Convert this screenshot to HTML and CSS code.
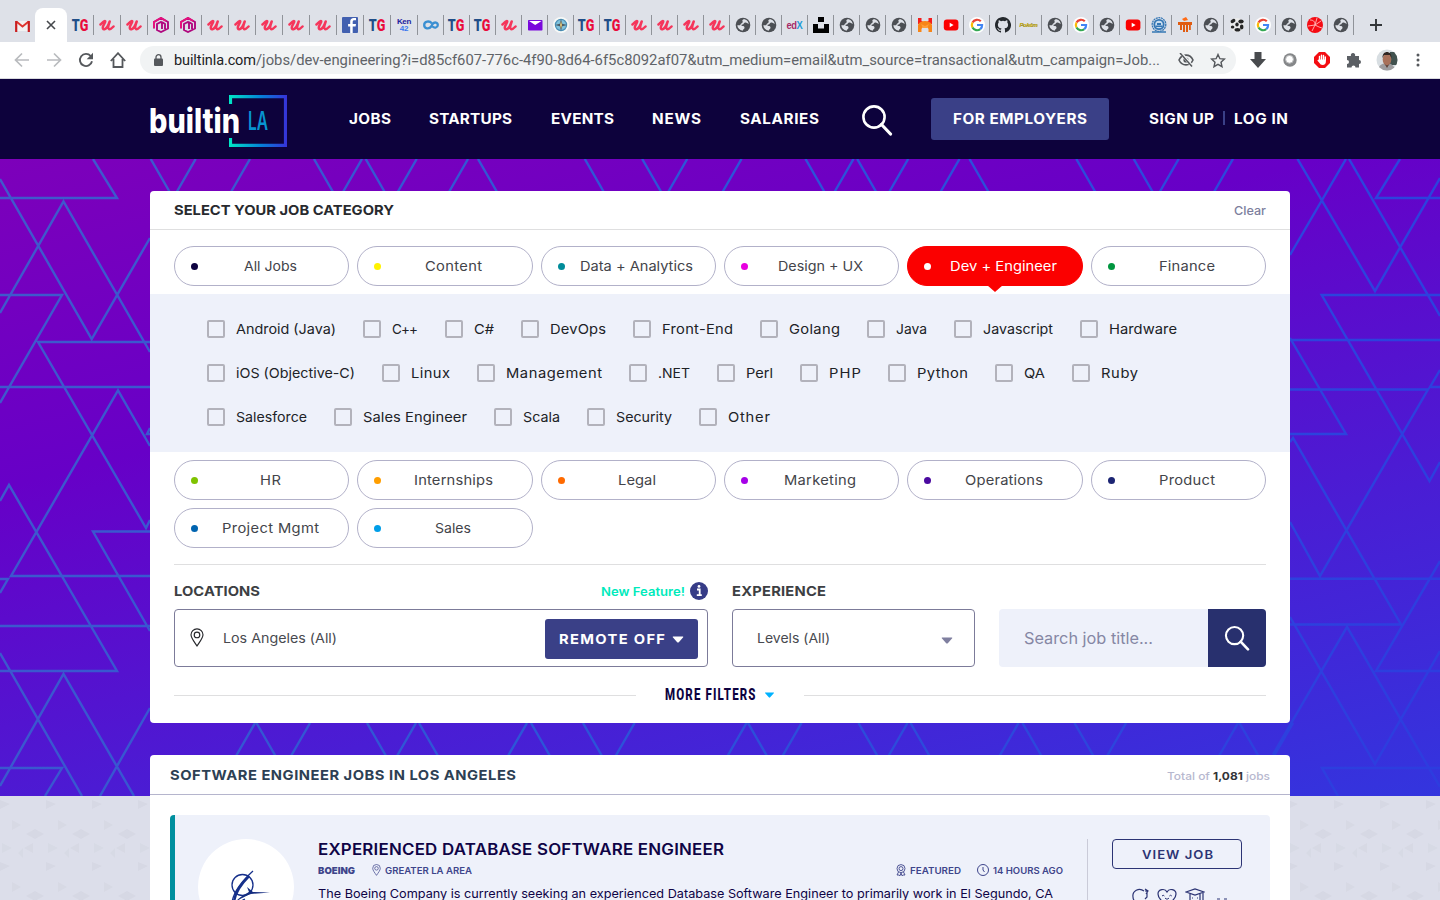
FILE: index.html
```html
<!DOCTYPE html>
<html lang="en">
<head>
<meta charset="utf-8">
<title>Dev + Engineer Jobs | Built In LA</title>
<link rel="stylesheet" href="styles.css">
</head>
<body>
<svg width="0" height="0" class="defs">
  <defs>
    <symbol id="u" viewBox="0 0 16 16"><path d="M1.500 7.500C3.500 5.500 5 3.500 6 4S4.500 7.500 4 9.500s0 3 1.500 2.700c2.500-.4 4-4.200 5.200-7.700-1.200 3.500-2 7-.7 7.600 1.200.4 3-1 4.500-2.600" fill="none" stroke="#f5365b" stroke-width="2.500" stroke-linecap="round" stroke-linejoin="round"/></symbol>
    <symbol id="gn" viewBox="0 0 16 16"><path d="M1 11.500V5l7-4 7 4v6.500L8 15l-4-2V7l4-2 1 1v6m0-7 3 2v5" fill="none" stroke="#b0087f" stroke-width="1.900"/><path d="M1 11V5l7-4 5 3" fill="none" stroke="#e5127d" stroke-width="2"/></symbol>
    <symbol id="fb" viewBox="0 0 16 16"><rect width="16" height="16" rx="1" fill="#4260b0"/><path d="M14 3.200h-1.600c-1.200 0-1.700.6-1.700 1.700V7H14l-.4 2.500h-2.900V16H8.200V9.500H6.100V7h2.100V4.500C8.200 2.200 9.600 1 11.800 1c1 0 2.200.1 2.200.1z" fill="#fff"/></symbol>
    <symbol id="co" viewBox="0 0 16 16"><path d="M8.800 6.200C6.500 3.500 1.200 4 1.200 8s5 4.500 7 1.500L9.600 7c2-2.500 5.200-1.600 5.200 1s-3.200 3.600-5.400 1.500" fill="none" stroke="#3a8fd2" stroke-width="2.300"/></symbol>
    <symbol id="mail" viewBox="0 0 16 16"><rect x="1" y="3" width="14.500" height="10.500" rx=".8" fill="#7a08dc"/><path d="M2 4h12.500L8.200 8z" fill="#fff"/></symbol>
    <symbol id="compass" viewBox="0 0 16 16"><circle cx="8" cy="8" r="8" fill="#f7f9f7"/><circle cx="8" cy="8" r="5.600" fill="#7fc2dc" stroke="#4b90b8" stroke-width="1.200"/><path d="m8 2 1.200 4.800L14 8l-4.800 1.200L8 14 6.800 9.200 2 8l4.800-1.200z" fill="#4a5963"/><path d="m8 4 1 4-1 4-1-4z" fill="#e3c879"/></symbol>
    <symbol id="globe" viewBox="0 0 16 16"><circle cx="8" cy="8" r="7.300" fill="#4c4f54"/><path d="M8.500 2.300c2.500-.3 5 2 5.200 4.700-1.500-.6-2-1.700-3.700-1.400-1.500.4-1 1.900-2.500 1.900C6 7.500 6.100 9 7.500 9c1.200 0 2.200.5 2 2-.3 1.300-1.500 1-1.800 2.700C4.500 13 2.600 11 2.300 8.200c1.500 0 2.700.6 3.200-.7.400-1.300 2-1 2.200-2.500.1-1-1.200-1.500.8-2.700z" fill="#dfe2e8"/></symbol>
    <symbol id="unsplash" viewBox="0 0 16 16"><path d="M5 0h6v5H5zM0 7h5v4.500h6V7h5v9H0z" fill="#000"/></symbol>
    <symbol id="moz" viewBox="0 0 16 16"><path d="M1 1h3.500v3L8 6l3.500-2V1H15v6H1z" fill="#f41d1d"/><path d="M1 15V8c1-3 4-4 7-4s6 1 7 4v7h-3.500v-3C10 9 6 9 4.500 12v3z" fill="#f78518"/><path d="m4 7 4 2 4-2-2 4H6z" fill="#ff9e38"/></symbol>
    <symbol id="yt" viewBox="0 0 16 16"><rect x=".8" y="2.500" width="14.600" height="11" rx="3" fill="#fb0000"/><path d="M6.700 5.700v4.600L10.600 8z" fill="#fff"/></symbol>
    <symbol id="goog" viewBox="0 0 16 16"><circle cx="8" cy="8" r="8" fill="#fff"/><g fill="none" stroke-width="2.200"><path d="M11.800 4.300A5.200 5.200 0 0 0 3.500 5.500" stroke="#ea4335"/><path d="M3.500 5.500a5.200 5.200 0 0 0 0 5" stroke="#fbbc05"/><path d="M3.500 10.500a5.200 5.200 0 0 0 7.800 1.600" stroke="#34a853"/><path d="M11.300 12.100A5 5 0 0 0 13.100 8H8" stroke="#4285f4"/></g></symbol>
    <symbol id="gh" viewBox="0 0 16 16"><path d="M8 0C3.580 0 0 3.580 0 8c0 3.540 2.290 6.530 5.470 7.590.4.070.55-.17.55-.38v-1.490c-2.230.49-2.700-.95-2.700-.95-.36-.92-.89-1.170-.89-1.170-.73-.5.050-.49.050-.49.800.060 1.230.83 1.230.83.710 1.230 1.870.87 2.330.66.070-.52.28-.87.5-1.070-1.780-.2-3.640-.89-3.640-3.950 0-.87.310-1.590.82-2.150-.08-.2-.36-1.020.08-2.120 0 0 .67-.21 2.200.82a7.600 7.600 0 0 1 4 0c1.530-1.040 2.200-.82 2.200-.82.44 1.100.16 1.920.08 2.120.51.56.82 1.270.82 2.150 0 3.070-1.870 3.750-3.650 3.950.29.25.54.73.54 1.480v2.200c0 .21.150.46.55.38A8 8 0 0 0 8 0z" fill="#24282d"/></symbol>
    <symbol id="gear" viewBox="0 0 16 16"><circle cx="8" cy="7.500" r="6.800" fill="none" stroke="#3577b5" stroke-width="1.300" stroke-dasharray="2 .6"/><circle cx="8" cy="7.500" r="4.700" fill="#c9ddef" stroke="#3577b5" stroke-width="1.800"/><path d="M4.500 8.500h7v1.500h-7zM6 6h4v2H6z" fill="#3577b5"/><path d="M1 15h14" stroke="#3577b5" stroke-width="1.500"/></symbol>
    <symbol id="manip" viewBox="0 0 16 16"><path d="M1 5h14v3H1zM3 8h2v5H3zM6 8h2v7H6zM9 8h2v7H9zM12 8h1.800v5H12z" fill="#e05b10"/><path d="m5 2 4-2 2 3-4 1z" fill="#ff6b16"/></symbol>
    <symbol id="ball" viewBox="0 0 16 16"><circle cx="8" cy="8" r="7" fill="#ececec"/><g fill="#252525"><ellipse cx="4" cy="4" rx="2.600" ry="1.800" transform="rotate(-30 4 4)"/><ellipse cx="12" cy="4.500" rx="2.700" ry="2"/><ellipse cx="8" cy="7.500" rx="1.700" ry="1.900"/><ellipse cx="3.600" cy="10" rx="1.800" ry="1.500"/><ellipse cx="12.700" cy="10" rx="1.800" ry="2.400"/><ellipse cx="8.500" cy="12.800" rx="3" ry="1.800"/></g></symbol>
    <symbol id="redball" viewBox="0 0 16 16"><circle cx="8" cy="8" r="8" fill="#f50b13"/><path d="M3 3c3 0 5 1 5 5M1 9l7-1 6-4M5 14l3-6 4 2 3 1M10 1l-2 7" fill="none" stroke="#ffb9b9" stroke-width=".9"/></symbol>
    <symbol id="glass" viewBox="0 0 32 32"><circle cx="13" cy="13" r="10.600" fill="none" stroke="#fff" stroke-width="2.600"/><path d="m20.500 20.500 9 9.500" stroke="#fff" stroke-width="3.200" stroke-linecap="round"/></symbol>
    <symbol id="pin" viewBox="0 0 14 19"><path d="M7 18C4 13.500 1 10 1 6.800a6 6 0 0 1 12 0C13 10 10 13.500 7 18z" fill="none" stroke="currentColor" stroke-width="1.150"/><circle cx="7" cy="6.900" r="2.800" fill="none" stroke="currentColor" stroke-width="1.150"/></symbol>
    <symbol id="caret" viewBox="0 0 12 7"><path d="M1.500.5h9c.8 0 1 .6.5 1.100L6.800 6.200c-.5.500-1.100.5-1.600 0L1 1.600C.5 1.100.7.500 1.500.5z" fill="currentColor"/></symbol>
    <pattern id="paper" width="46" height="62" patternUnits="userSpaceOnUse"><path d="m0 4 10 4-10 5z" fill="#cfd2de" opacity=".5"/><path d="m26 38 9-5v10zM35 33l9 5-9 5z" fill="#cfd2dd" opacity=".5"/><path d="m24 52 9-5v10zM12 24l9 5-9 5z" fill="#d0d3de" opacity=".45"/><path d="m2 47 10 5-10 5zM18 57l5-5v10z" fill="#d2d5e0" opacity=".5"/></pattern>
    <linearGradient id="trace" gradientUnits="userSpaceOnUse" x1="0" y1="0" x2="1440" y2="500"><stop offset="0" stop-color="#4159cb"/><stop offset=".45" stop-color="#2c55d8"/><stop offset="1" stop-color="#2d3ddf"/></linearGradient>
    <linearGradient id="neon" gradientUnits="userSpaceOnUse" x1="80" y1="0" x2="138" y2="0"><stop offset="0" stop-color="#00e8c5"/><stop offset=".55" stop-color="#0481d8"/><stop offset="1" stop-color="#3732d8"/></linearGradient>
  </defs>
</svg>

<div class="browser">
  <div class="tabstrip">
    <div class="tab-gmail"><svg width="15" height="12" viewBox="0 0 15 12"><path d="M1 1h13v10H1z" fill="#f2f2f2"/><path d="m1.300 1.500 6.200 5 6.200-5" fill="none" stroke="#df352e" stroke-width="2"/><path d="M1.200 12V1M13.800 12V1" stroke="#c91f20" stroke-width="2.200"/></svg></div>
    <div class="tab-active"><svg width="10" height="10" viewBox="0 0 10 10"><path d="m1 1 8 8M9 1 1 9" stroke="#45484c" stroke-width="1.600"/></svg></div>
    <div class="tabs" id="tabs"></div>
    <svg class="tab-plus" width="12" height="12" viewBox="0 0 12 12"><path d="M6 0v12M0 6h12" stroke="#333639" stroke-width="1.900"/></svg>
  </div>
  <div class="toolbar">
    <svg width="16" height="16" viewBox="0 0 16 16"><path d="M15 8H2m6-6.500L1.500 8 8 14.500" fill="none" stroke="#b9bbbe" stroke-width="1.700"/></svg>
    <svg width="16" height="16" viewBox="0 0 16 16"><path d="M1 8h13M8 1.500 14.500 8 8 14.500" fill="none" stroke="#b9bbbe" stroke-width="1.700"/></svg>
    <svg width="16" height="16" viewBox="0 0 16 16"><path d="M14 9.300A6.100 6.100 0 1 1 12.700 4" fill="none" stroke="#55585c" stroke-width="1.900"/><path d="M15 .8v6.400H8.700z" fill="#55585c"/></svg>
    <svg width="16" height="16" viewBox="0 0 16 16"><path d="M3.500 7v8h9V7M.8 9 8 1.200 15.200 9" fill="none" stroke="#55585c" stroke-width="1.800"/></svg>
    <div class="address">
      <svg width="9" height="12" viewBox="0 0 9 12"><rect y="4.500" width="9" height="7.500" rx="1" fill="#55585c"/><path d="M2 5V3.200a2.500 2.500 0 0 1 5 0V5" fill="none" stroke="#55585c" stroke-width="1.300"/></svg>
      <div class="url"><span class="host" data-w="82">builtinla.com</span><span data-w="904">/jobs/dev-engineering?i=d85cf607-776c-4f90-8d64-6f5c8092af07&amp;utm_medium=email&amp;utm_source=transactional&amp;utm_campaign=Job...</span></div>
      <svg width="16" height="14" viewBox="0 0 16 14"><path d="M1 7c3-6.500 11-6.500 14 0-3 6.500-11 6.500-14 0z" fill="none" stroke="#55585c" stroke-width="1.600"/><circle cx="8" cy="7" r="2.600" fill="#55585c"/><path d="m3 0 11 13" stroke="#f1f3f4" stroke-width="3"/><path d="m2 0 12 13.500" stroke="#55585c" stroke-width="1.500"/></svg>
      <svg class="star" width="16" height="15" viewBox="0 0 16 15"><path d="m8 1.500 1.900 4.200 4.500.4L11 9.200l1 4.500-4-2.400-4 2.400 1-4.500L1.600 6.100l4.500-.4z" fill="none" stroke="#55585c" stroke-width="1.400"/></svg>
    </div>
    <div class="extensions">
      <svg width="16" height="16" viewBox="0 0 16 16"><path d="M4.500 0h7v7H16l-8 9-8-9h4.500z" fill="#484b4e"/></svg>
      <svg width="14" height="14" viewBox="0 0 14 14"><circle cx="7" cy="7" r="6.700" fill="#858789"/><circle cx="6.500" cy="6.300" r="3.900" fill="#fff" stroke="#b8b9ba"/></svg>
      <svg width="16" height="16" viewBox="0 0 16 16"><path d="M5 0h6l5 5v6l-5 5H5l-5-5V5z" fill="#f40d12"/><path d="M5.500 8V4.500M7.500 8V3.200M9.500 8V3.500M11.300 8V5" fill="none" stroke="#fff" stroke-width="1.400" stroke-linecap="round"/><path d="M4.800 7.500h7.100v2c0 2-1.200 3.500-3.200 3.500-1.700 0-2.500-.7-3.200-1.900L3.300 8.400l1-.6z" fill="#fff"/></svg>
      <svg width="16" height="16" viewBox="0 0 16 16"><path d="M1 4h4a2.200 2.200 0 1 1 4 0h4v4a2 2 0 1 1 0 4v3.500H9.500a2 2 0 1 0-4 0H1V12a2 2 0 1 0 0-4z" fill="#5b5f64"/></svg>
      <svg width="22" height="22" viewBox="0 0 22 22"><defs><clipPath id="round"><circle cx="11" cy="11" r="10.500"/></clipPath></defs><g clip-path="url(#round)"><path d="M0 0h22v22H0z" fill="#d8dee2"/><path d="M14 3h8v13h-8z" fill="#41524f"/><path d="M2 22c0-6 5-8 9-8s8 3 8 8z" fill="#9e9d9f"/><ellipse cx="11" cy="10.500" rx="4.300" ry="6" fill="#a8715a"/><path d="M6.500 9c-.5-8 9.500-8 9 0l-1.500-3H8z" fill="#302723"/><path d="M8 14c2 3 4 3 6 0l-3 5z" fill="#60443b"/></g></svg>
      <svg width="4" height="14" viewBox="0 0 4 14"><g fill="#55585c"><circle cx="2" cy="2" r="1.500"/><circle cx="2" cy="7" r="1.500"/><circle cx="2" cy="12" r="1.500"/></g></svg>
    </div>
  </div>
</div>

<header class="site-header">
  <div class="logo">
    <span class="brand" data-w="91" data-scale="1">builtin</span><span class="city" data-w="20" data-scale="1">LA</span>
    <svg width="58" height="52" viewBox="80 0 58 52"><path d="M81.500 9V1.600h55v48.800h-55V43" fill="none" stroke="url(#neon)" stroke-width="3.200"/></svg>
  </div>
  <nav class="nav">
    <a data-w="42">JOBS</a><a data-w="83">STARTUPS</a><a data-w="63">EVENTS</a><a data-w="49">NEWS</a><a data-w="79">SALARIES</a>
  </nav>
  <svg class="nav-search" width="32" height="32"><use href="#glass"/></svg>
  <a class="employers"><span data-w="134">FOR EMPLOYERS</span></a>
  <div class="account"><a data-w="65">SIGN UP</a><i></i><a data-w="54">LOG IN</a></div>
</header>

<main class="page">
  <div class="backdrop">
    <svg class="hero" width="1440" height="637" viewBox="0 0 1440 637"><g id="traces" fill="none" stroke="url(#trace)" stroke-width="2.400">
      <path d="M93 0 117 39H0M0 20 91.700 180 150 79M0 154 63.500 42.500 150 193M0 136H62L0 244M150 183H38L146 369l4-8M0 228h150M150 287 118 231.500 11 417H150M150 269l-3 6h3M0 342l9-16L117 512H0M150 372.500H93L150 472M0 420h8l-8 14M0 467h150M0 494 82 637M0 627 63.500 515 134 637M0 609H62L45 637M150 549 100 637"/>
      <path d="M1297.500 0 1375 132 1440 19M1346 0 1290 96M1349 0 1440 157M1400 0 1376 39H1440M1440 136H1321.700L1429.500 322 1440 303M1290 181H1440M1290 179 1346 275H1290M1290 230.500H1428L1320 417 1290 363M1440 211 1430 228H1440M1290 283 1293 279 1401 465.500H1290M1290 419.700H1440M1290 458 1375 605 1440 492M1440 402 1376 512H1440M1273 595.500 1347 468 1440 628M1440 609H1322L1338 637"/>
    </g></svg>
    <svg class="ground" width="1440" height="104"><rect width="1440" height="104" fill="url(#paper)"/></svg>
  </div>

  <section class="filters">
    <div class="filters-head"><h2 data-w="220">SELECT YOUR JOB CATEGORY</h2><a data-w="32">Clear</a></div>
    <div class="pills" id="pills-top"></div>
    <div class="skills" id="skills"></div>
    <div class="pills pills-rest" id="pills-rest"></div>
    <div class="controls">
      <div class="control location">
        <div class="control-label"><b data-w="86">LOCATIONS</b><span class="feature"><em data-w="84">New Feature!</em><svg width="18" height="18" viewBox="0 0 18 18"><circle cx="9" cy="9" r="9" fill="#363c87"/><path d="M7 7.500h2.700V13M6.800 13.200h5" fill="none" stroke="#fff" stroke-width="1.800"/><circle cx="9" cy="4.400" r="1.400" fill="#fff"/></svg></span></div>
        <div class="field"><svg width="14" height="19"><use href="#pin"/></svg><span data-w="114">Los Angeles (All)</span><button class="remote"><span data-w="106">REMOTE OFF</span><svg width="12" height="7"><use href="#caret"/></svg></button></div>
      </div>
      <div class="control level">
        <div class="control-label"><b data-w="94">EXPERIENCE</b></div>
        <div class="field"><span data-w="73">Levels (All)</span><svg width="12" height="7"><use href="#caret"/></svg></div>
      </div>
      <div class="search"><div class="search-input"><span data-w="129">Search job title...</span></div><button><svg width="26" height="26"><use href="#glass"/></svg></button></div>
    </div>
    <div class="more"><i></i><div class="more-label"><span class="narrow">MORE FILTERS</span><svg width="11" height="6"><use href="#caret"/></svg></div><i></i></div>
  </section>

  <section class="results">
    <div class="results-head"><h1 data-w="346">SOFTWARE ENGINEER JOBS IN LOS ANGELES</h1><p data-w="103">Total of <b>1,081</b> jobs</p></div>
    <article class="job">
      <div class="company-logo"><svg width="96" height="96" viewBox="0 0 96 96"><g fill="none" stroke="#16308b"><circle cx="44.500" cy="46" r="10.500" stroke-width="1.300"/><path d="M55 32C44 42 35 54 34 64c0 6 8-2 13-4" stroke-width="1.300"/><path d="M51 37C42 46 36 56 36 65" stroke-width="2.500"/></g><path d="m49 48 6 5 17 .500-19 1.500c-8 3-12 6-16 8 5-5 9-7 14-10z" fill="#142c80"/></svg></div>
      <div class="job-body">
        <h3 data-w="406">EXPERIENCED DATABASE SOFTWARE ENGINEER</h3>
        <div class="meta"><b data-w="37">BOEING</b><svg width="9" height="12" viewBox="0 0 14 19"><use href="#pin"/></svg><span data-w="87">GREATER LA AREA</span>
          <svg class="award" width="10" height="12" viewBox="0 0 10 12"><g fill="none" stroke="currentColor" stroke-width=".9"><circle cx="5" cy="4.600" r="4"/><circle cx="5" cy="4.600" r="2"/><path d="M2.500 8 1 11h2l1 .8L5 9l1 2.800 1-.8h2L7.500 8"/></g></svg><span data-w="51">FEATURED</span>
          <svg class="clock" width="12" height="12" viewBox="0 0 12 12"><circle cx="6" cy="6" r="5.500" fill="none" stroke="currentColor"/><path d="M6 3v3l1.500 2" fill="none" stroke="currentColor"/></svg><span data-w="70">14 HOURS AGO</span></div>
        <p data-w="735">The Boeing Company is currently seeking an experienced Database Software Engineer to primarily work in El Segundo, CA</p>
      </div>
      <div class="job-side"><a class="view"><span data-w="71">VIEW JOB</span></a>
        <div class="perks"><svg width="18" height="18" viewBox="0 0 18 18"><path d="M13 3C8-1 1 3 2 9c0 4 4 7 7 7M14 1l3 2-2 3m2-3h-3m2 0v6l-2 2" fill="none" stroke="currentColor" stroke-width="1.200"/></svg><svg width="20" height="18" viewBox="0 0 20 18"><path d="M10 17C4 13 1 10 1 6c0-5 7-6 9-2 2-4 9-3 9 2 0 4-3 7-9 11z" fill="none" stroke="currentColor" stroke-width="1.200"/><path d="M5 8q1.200-1.500 2.400 0m5 0q1.200-1.500 2.400 0M8 10c1.500 1.500 2.500 1.500 4 0" fill="none" stroke="currentColor"/></svg><svg width="20" height="18" viewBox="0 0 20 18"><path d="m1 4 9-3 9 3-9 3zM5 6v9h10V6M7 10h1m4 0h1m5-5v7" fill="none" stroke="currentColor" stroke-width="1.200"/></svg><svg width="12" height="8" viewBox="0 0 12 8"><path d="M1 1h3m4 0h3" stroke="currentColor"/></svg></div>
      </div>
    </article>
  </section>
</main>
<script src="app.js"></script>
</body>
</html>
```
FILE: styles.css
```css
* { box-sizing: border-box; }
body { margin: 0; width: 1440px; height: 900px; overflow: hidden; font-family: Inter, "Open Sans", sans-serif; color: #282a2e; }
svg { display: block; flex: none; }
h1, h2, h3, p { margin: 0; }
button { border: 0; padding: 0; font: inherit; color: inherit; }
.defs { position: absolute; }
[data-w] { display: inline-block; white-space: nowrap; flex: none; transform-origin: left center; }

.browser { height: 79px; background: #fff; border-bottom: 1px solid #d9dade; }
.tabstrip { display: flex; height: 42px; background: #dee1e8; }
.tab-gmail { width: 35px; display: flex; align-items: center; padding: 9px 0 0 15px; }
.tab-active { width: 32px; margin-top: 8px; border-radius: 8px 8px 0 0; background: #fff; display: grid; place-items: center; }
.tabs { display: flex; height: 42px; padding-top: 15px; }
.tab { width: 26px; height: 20px; border-right: 1px solid #909399; display: grid; place-items: center; }
.tab.wide { width: 27px; }
.tab-plus { margin: 19px 0 0 16px; }
.mark { font: 900 17px/20px Roboto, sans-serif; transform: scaleX(.74); color: #e90b3c; }
.mark b { font-weight: 900; color: #214e87; }
.mark.tiny { font: 700 8px/7px "Liberation Sans", sans-serif; color: #3978ef; transform: none; text-align: center; letter-spacing: -.3px; }
.mark.tiny b { display: block; color: #20209c; }
.mark.edx { font: 700 11px/20px "Liberation Sans", sans-serif; transform: scaleX(.85); color: #229bd7; letter-spacing: -.5px; }
.mark.edx b { color: #a72a67; }
.mark.poke { font: italic 700 6px/7px "Liberation Sans", sans-serif; color: #e8c800; -webkit-text-stroke: .2px #504b24; transform: none; letter-spacing: -.3px; }
.toolbar { display: flex; align-items: center; height: 36px; padding-left: 14px; gap: 16px; }
.address { display: flex; align-items: center; width: 1096px; height: 28px; margin-left: -2px; padding-left: 14px; border-radius: 14px; background: #f1f3f4; }
.url { display: flex; width: 986px; margin: 1px 18px 0 11px; white-space: nowrap; color: #5f6368; font: 400 14.5px/20px Roboto, sans-serif; }
.host { color: #202124; }
.star { margin-left: 16px; }
.extensions { display: flex; align-items: center; gap: 16px; margin-left: -2px; }
.extensions svg:nth-child(2) { margin: 0 1px; }
.extensions svg:nth-child(5) { margin-left: -2px; margin-right: 2px; }

.site-header { display: flex; align-items: center; height: 80px; padding-left: 149px; background: #0d023c; color: #fff; font-weight: 700; font-size: 14px; }
.logo { position: relative; display: flex; align-items: center; width: 138px; height: 52px; margin-top: 4px; }
.logo svg { position: absolute; right: 0; top: 0; }
.brand { font-size: 34px; line-height: 34px; font-weight: 800; }
.city { margin-left: 8px; font-size: 25px; line-height: 34px; font-weight: 600; color: #0794d2; }
.nav { display: flex; gap: 38.500px; margin-left: 62px; }
.nav, .employers span, .account { position: relative; top: -1px; }
.nav-search { margin-left: 42px; margin-top: 2px; }
.employers { display: grid; place-items: center; width: 178px; height: 42px; margin-left: 38px; border-radius: 3px; background: #3a4087; }
.account { display: flex; align-items: center; margin-left: 40px; gap: 9px; }
.account i { width: 2px; height: 14px; background: #3a4087; }

.page { position: relative; height: 741px; padding: 32px 150px 0; overflow: hidden; }
.backdrop { position: absolute; inset: 0; z-index: -1; background: #dcdeea; }
.hero { background: linear-gradient(166deg, #7d00ba 0%, #6700c7 33%, #4a1dd4 68%, #3335de 100%); }
.filters, .results { width: 1140px; background: #fff; border-radius: 4px; }
.filters { height: 532px; }
.filters-head { display: flex; align-items: center; justify-content: space-between; height: 39px; padding: 0 24px; border-bottom: 1px solid #dfdfe0; }
.filters-head h2 { font-size: 13.500px; font-weight: 700; }
.filters-head a { font-size: 12px; font-weight: 500; color: #7d7f9e; }
.pills { display: grid; grid-template-columns: repeat(6, 1fr); gap: 8px; padding: 16px 24px 8px; }
.pills-rest { padding: 8px 24px 16px; }
.pill { position: relative; display: flex; align-items: center; height: 40px; padding-left: 16px; border: 1px solid #b2b1c9; border-radius: 20px; font-size: 13.500px; color: #43444a; }
.pill::before { content: ""; width: 7px; height: 7px; border-radius: 50%; background: var(--dot); }
.pill-text { display: flex; flex: 1; justify-content: center; padding-right: 6px; }
.pill.active { background: #fb0000; border-color: #fb0000; color: #fff; }
.pill.active::after { content: ""; position: absolute; left: 50%; bottom: -7px; margin-left: -8px; border: 8px solid transparent; border-top: 7px solid #fb0000; border-bottom: 0; }
.skills { height: 158px; padding: 13px 57px; background: #eef1fa; }
.skill-row { display: flex; align-items: center; height: 44px; gap: 27px; }
.skill { display: flex; align-items: center; gap: 11px; font-size: 13.500px; color: #202226; }
.skill i { width: 18px; height: 18px; border: 2px solid #b2b2bb; border-radius: 2px; }
.controls { display: flex; gap: 24px; align-items: flex-end; margin: 0 24px; padding-top: 16px; border-top: 1px solid #dfdfe0; }
.control-label { display: flex; justify-content: space-between; align-items: center; height: 20px; margin-bottom: 8px; font-size: 13.500px; color: #3d3f43; }
.feature { display: flex; align-items: center; gap: 5px; color: #00eabb; font-size: 12px; font-weight: 600; }
.feature em { font-style: normal; }
.location { width: 534px; }
.level { width: 243px; }
.field { display: flex; align-items: center; height: 58px; border: 1px solid #7c7b99; border-radius: 4px; font-size: 13.500px; color: #484a50; }
.field > svg { color: #25262a; }
.location .field { padding: 0 9px 0 15px; }
.location .field > svg { margin-top: -2px; }
.location .field > span { margin-left: 19px; }
.level .field { padding: 0 21px 0 24px; justify-content: space-between; }
.level .field > svg { color: #7f7f9f; margin-top: 4px; }
.remote { display: flex; align-items: center; justify-content: center; gap: 8px; width: 153px; height: 40px; margin: 2px 0 0 auto; border-radius: 3px; background: #3a4087; color: #fff; font-size: 13.500px; font-weight: 700; }
.search { display: flex; width: 267px; height: 58px; border-radius: 4px; overflow: hidden; background: #eef1fa; color: #8587a4; font-size: 16px; }
.search-input { display: flex; align-items: center; width: 209px; padding-left: 25px; }
.search button { display: grid; place-items: center; width: 58px; background: #28306e; }
.more { display: flex; align-items: center; height: 56px; padding: 0 24px; }
.more i { flex: 1; height: 1px; background: #dfdfe0; }
.more-label { display: flex; align-items: center; width: 168px; padding-left: 29px; color: #00b2ff; }
.more-label svg { margin-left: 8px; }
.narrow { width: 91px; white-space: nowrap; color: #0d0240; font: 800 16px/20px Roboto, sans-serif; letter-spacing: 1.600px; transform: scaleX(.72); transform-origin: left; }

.results { height: 300px; margin-top: 32px; }
.results-head { display: flex; align-items: center; justify-content: space-between; height: 40px; padding: 0 20px; border-bottom: 1px solid #b5b5cd; }
.results-head h1 { font-size: 13.500px; font-weight: 700; color: #2d4054; }
.results-head p { font-size: 11px; font-weight: 500; color: #b7b8cf; padding-top: 2px; }
.results-head p b { color: #333438; }
.job { display: flex; height: 220px; margin: 20px 20px 0; padding: 24px 28px 0 23px; border-left: 5px solid #008f9e; border-radius: 4px; background: #eef1fa; color: #0f0446; }
.company-logo { width: 96px; height: 96px; border-radius: 50%; background: #fff; }
.job-body { width: 770px; height: 150px; padding-left: 24px; }
.job-body h3 { font-size: 15.500px; line-height: 20px; font-weight: 600; }
.meta { display: flex; align-items: center; height: 20px; color: #3e458b; font-size: 9px; font-weight: 600; }
.meta svg { margin: 0 4px 0 17px; }
.meta .award { margin-left: 424px; }
.meta .clock { margin-left: 16px; }
.job-body p { margin-top: 7px; font-size: 12.300px; line-height: 14px; }
.job-side { flex: 1; height: 150px; margin-left: 23px; padding-left: 24px; border-left: 1px solid #cacbd8; color: #2c3474; }
.view { display: grid; place-items: center; width: 130px; height: 30px; border: 1px solid #2c3474; border-radius: 4px; font-size: 12px; font-weight: 600; }
.perks { display: flex; gap: 8px; padding: 19px 0 0 19px; }
.perks svg:last-child { margin: 10px 0 0 3px; }
```
FILE: app.js
```js
const fav = 'u u gn gn u u u u u fb TG ken co TG TG u mail compass TG TG u u u u globe globe edx unsplash globe globe globe moz yt goog gh poke globe goog globe yt gear manip globe ball goog globe redball globe'.split(' ');
const words = {
  TG: '<span class="mark"><b>T</b>G</span>',
  ken: '<span class="mark tiny"><b>Ken</b>42</span>',
  edx: '<span class="mark edx"><b>ed</b>X</span>',
  poke: '<span class="mark poke">Pokém</span>'
};
document.getElementById('tabs').innerHTML = ['TG', ...fav].map((name, i) =>
  `<div class="tab${i < 13 ? ' wide' : ''}">${words[name] || `<svg width="16" height="16"><use href="#${name}"/></svg>`}</div>`).join('');

// [label, dot colour, label width]
const top6 = [['All Jobs', '#0d0240', 53], ['Content', '#fff200', 57], ['Data + Analytics', '#008c9a', 113], ['Design + UX', '#e800e0', 85], ['Dev + Engineer', '#fff', 107], ['Finance', '#00963f', 56]];
const rest = [['HR', '#7fc300', 21], ['Internships', '#ff9e00', 79], ['Legal', '#ff6a00', 38], ['Marketing', '#a600e8', 72], ['Operations', '#4b0aa0', 78], ['Product', '#1c2573', 56], ['Project Mgmt', '#0064b0', 97], ['Sales', '#009ee8', 36]];
const pill = ([text, dot, w]) => `<div class="pill${text === 'Dev + Engineer' ? ' active' : ''}" style="--dot:${dot}"><div class="pill-text"><span data-w="${w}">${text}</span></div></div>`;
document.getElementById('pills-top').innerHTML = top6.map(pill).join('');
document.getElementById('pills-rest').innerHTML = rest.map(pill).join('');

const skills = [
  [['Android (Java)', 100], ['C++', 26], ['C#', 20], ['DevOps', 56], ['Front-End', 71], ['Golang', 51], ['Java', 31], ['Javascript', 70], ['Hardware', 68]],
  [['iOS (Objective-C)', 119], ['Linux', 39], ['Management', 96], ['.NET', 32], ['Perl', 27], ['PHP', 32], ['Python', 51], ['QA', 21], ['Ruby', 37]],
  [['Salesforce', 71], ['Sales Engineer', 104], ['Scala', 37], ['Security', 56], ['Other', 42]]
];
document.getElementById('skills').innerHTML = skills.map(row =>
  `<div class="skill-row">${row.map(([t, w]) => `<label class="skill"><i></i><span data-w="${w}">${t}</span></label>`).join('')}</div>`).join('');

// Repeating triangle edges that show above and below the filter card
const period = 491.5;
let d = '';
for (let k = -1; k < 3; k++) {
  const add = (xs, dir, y) => xs.forEach(x => {
    const a = x + k * period;
    if (a > 146 && a < 1294) d += `M${a} ${y}l${dir * 19} 33`;
  });
  add([93.3, 150.7, 314, 365.7, 478], 1, 0);
  add([195.7, 250, 362, 416.7, 468], -1, 0);
  add([256.5, 367, 419, 531, 583], 1, 564);
  add([255, 310, 416, 527, 634.6], -1, 564);
}
const edges = document.createElementNS('http://www.w3.org/2000/svg', 'path');
edges.setAttribute('d', d);
document.getElementById('traces').append(edges);

// Widen each label to its set width: stretch the glyphs first, then track out the rest
document.querySelectorAll('[data-w]').forEach(el => {
  const w = +el.dataset.w;
  const natural = el.getBoundingClientRect().width;
  const ratio = w / natural;
  const scale = el.dataset.scale ? ratio : Math.min(Math.max(ratio, 1), 1.09);
  const inner = w / scale;
  el.style.letterSpacing = (inner - natural) / (el.textContent.length - 1) + 'px';
  el.style.width = inner + 'px';
  el.style.marginRight = w - inner + 'px';
  el.style.transform = `scaleX(${scale})`;
});
```
